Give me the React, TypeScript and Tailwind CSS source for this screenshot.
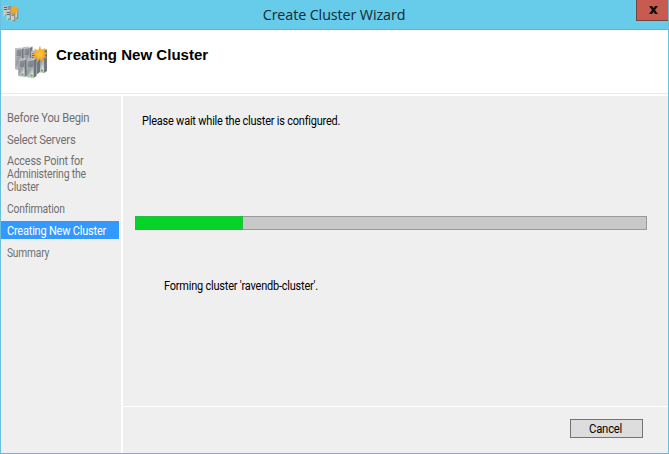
function Tower({ x, y, w = 6, h = 20 }: { x: number; y: number; w?: number; h?: number }) {
  return (
    <g transform={`translate(${x} ${y})`}>
      <path d={`M${w} 1.500 L${w + 3} 0 V${h - 2} L${w} ${h}z`} fill="#6f777d" />
      <path d={`M0 1 L3 0 L${w + 3} 0 L${w} 1.500z`} fill="#d8dddf" />
      <path d={`M0 1 L${w} 1.500 V${h} L0 ${h - 1.5}z`} fill="url(#metal)" stroke="#858b90" strokeWidth=".4" />
      <path d={`M1 3.500h${w - 1.6}M1 5.500h${w - 1.6}M1 7.500h${w - 1.6}`} stroke="#59636b" strokeWidth=".9" />
      <path d={`M${w - 3} ${h - 3.4}h2.200v2h-2.200z`} fill="#55b632" />
    </g>
  );
}

function ClusterIcon({ className }: { className: string }) {
  return (
    <svg viewBox="0 0 33 34" className={className}>
      <defs>
        <linearGradient id="metal" x1="0" y1="0" x2="0.6" y2="1">
          <stop stopColor="#c9ced1" />
          <stop offset=".6" stopColor="#949ba1" />
          <stop offset="1" stopColor="#e6eaeb" />
        </linearGradient>
        <radialGradient id="sun">
          <stop stopColor="#ffc83b" />
          <stop offset="1" stopColor="#f29b14" />
        </radialGradient>
      </defs>
      <Tower x={0.5} y={2.5} h={23} />
      <Tower x={8.5} y={1.5} h={22} />
      <Tower x={23} y={4} h={24} />
      <Tower x={16} y={5} h={24} />
      <Tower x={3.5} y={13.5} h={18.5} />
      <Tower x={11.5} y={13.5} h={19.5} w={7} />
      <path
        d="M25 0.800l1.300 4.500L30.500 3l-1.300 4.300 3.800.8-3.700 1.900 2.600 3.200-4.400-.9.500 4.700-3-3.600-2.700 4-.6-4.900-4.500 1.600 2.700-3.600L16.500 9l4.300-1.400-1.700-4.100 4 1.900z"
        fill="url(#sun)"
      />
    </svg>
  );
}

function TitleIcon({ className }: { className: string }) {
  return (
    <svg viewBox="0 0 16 17" className={className}>
      {[
        [0.5, 1, 10],
        [4, 0.5, 10],
        [11, 3, 11],
        [3.5, 6, 9],
        [8, 6.5, 10],
      ].map(([x, y, h]) => (
        <g key={`${x}-${y}`} transform={`translate(${x} ${y})`}>
          <rect width="4" height={h} fill="#c9cdcb" />
          <rect x="3.2" width="1" height={h} fill="#7c8589" />
          <path d="M.5 1.500h2.700M.5 3.500h2.700" stroke="#4f5c64" />
          <rect x="1.500" y={h - 1.5} width="1.500" height="1.300" fill="#5e9f3d" />
        </g>
      ))}
      <path d="M11.500 0l1 2.200 2.400-1.200-.6 2.500 1.700.7-1.700 1.300 1.300 2-2.400-.4v2.900l-1.800-2.100-1.700 2.200-.2-3-2.500.8 1.400-2.100-2.100-1.200 2.200-.7-.8-2.400 2.300 1z" fill="#f5a623" />
    </svg>
  );
}

const steps = [
  { lines: [{ text: "Before You Begin", fit: "scale-x-[0.935]" }], box: "h-[22px] pt-[3px]" },
  { lines: [{ text: "Select Servers", fit: "scale-x-[0.94]" }], box: "h-[22px] pt-[3px]" },
  {
    lines: [
      { text: "Access Point for", fit: "scale-x-[0.905]" },
      { text: "Administering the", fit: "scale-x-[0.872]" },
      { text: "Cluster", fit: "scale-x-[0.88]" },
    ],
    box: "h-[47px] pt-[2px]",
  },
  { lines: [{ text: "Confirmation", fit: "scale-x-[0.86]" }], box: "h-[21px] pt-[3px]" },
  {
    lines: [{ text: "Creating New Cluster", fit: "scale-x-[0.915]" }],
    box: "h-[18px] pt-[4px] bg-[#3399ff] text-white",
  },
  { lines: [{ text: "Summary", fit: "scale-x-[0.85]" }], box: "h-[27px] pt-[8px]" },
];

export default function App() {
  return (
    <div className="flex h-[454px] w-[669px] flex-col overflow-hidden border border-t-0 border-[#69bfdc] border-b-[#7fafc9] bg-[#efefef] font-[Roboto,sans-serif] text-[12px] leading-[13px] text-black">
      <header className="flex h-[30px] shrink-0 border-b border-[#62b4d0] bg-[#67cbea]">
        <div className="w-[31px] pt-[5px] pl-[2px]">
          <TitleIcon className="h-[17px] w-[16px]" />
        </div>
        <h1 className="flex-1 scale-x-[0.953] pt-[4px] text-center font-['Open_Sans',sans-serif] text-[15px] leading-[20px] tracking-[-0.1px] text-[#102a34]">
          Create Cluster Wizard
        </h1>
        <div className="w-[32px]">
          <button className="-mr-px flex h-[21px] w-[33px] items-center justify-center border-b border-l border-[#704541] bg-[#c75b50]" aria-label="Close">
            <svg width="9" height="8" viewBox="0 0 9 8" className="mb-px ml-px">
              <path d="M0 0h3l1.500 2L6 0h3L6 4l3 4H6L4.500 6 3 8H0l3-4z" fill="#111" />
            </svg>
          </button>
        </div>
      </header>
      <section className="flex h-[66px] shrink-0 border-b-2 border-white bg-white">
        <div className="flex h-[64px] w-full border-b border-[#e9e9e9]">
          <ClusterIcon className="mt-[15px] ml-[14px] h-[34px] w-[33px]" />
          <h2 className="mt-[17px] ml-[8px] origin-left scale-x-[1.075] font-['Liberation_Sans',sans-serif] text-[14px] leading-[17px] font-bold whitespace-nowrap">
            Creating New Cluster
          </h2>
        </div>
      </section>
      <div className="flex min-h-0 flex-1">
        <nav className="w-[122px] shrink-0 border-r-2 border-white pt-[13px] pr-[2px] text-[#707070]">
          {steps.map((step) => (
            <div key={step.lines[0].text} className={`${step.box} pl-[6px] whitespace-nowrap`}>
              {step.lines.map((line) => (
                <div key={line.text} className={`${line.fit} origin-left tracking-[-0.22px]`}>
                  {line.text}
                </div>
              ))}
            </div>
          ))}
        </nav>
        <main className="flex min-w-0 flex-1 flex-col">
          <div className="h-[311px] shrink-0 border-b border-white pt-[19px]">
            <p className="ml-[19px] origin-left scale-x-[0.913] tracking-[-0.22px]">Please wait while the cluster is configured.</p>
            <div className="mt-[88px] ml-[12px] h-[14px] w-[512px] border border-[#999] bg-[#c8c8c8]">
              <div className="-mt-px -ml-px h-[14px] w-[108px] border border-[#24bd40] bg-[#06d327]" />
            </div>
            <p className="mt-[50px] ml-[41px] origin-left scale-x-[0.913] tracking-[-0.22px]">Forming cluster 'ravendb-cluster'.</p>
          </div>
          <footer className="flex justify-end pt-[12px] pr-[25px]">
            <button className="flex h-[19px] w-[73px] justify-center border border-[#737373] bg-[#dddddd] pt-[3px] pr-px">
              <span className="scale-x-[0.94] tracking-[-0.22px]">Cancel</span>
            </button>
          </footer>
        </main>
      </div>
    </div>
  );
}
